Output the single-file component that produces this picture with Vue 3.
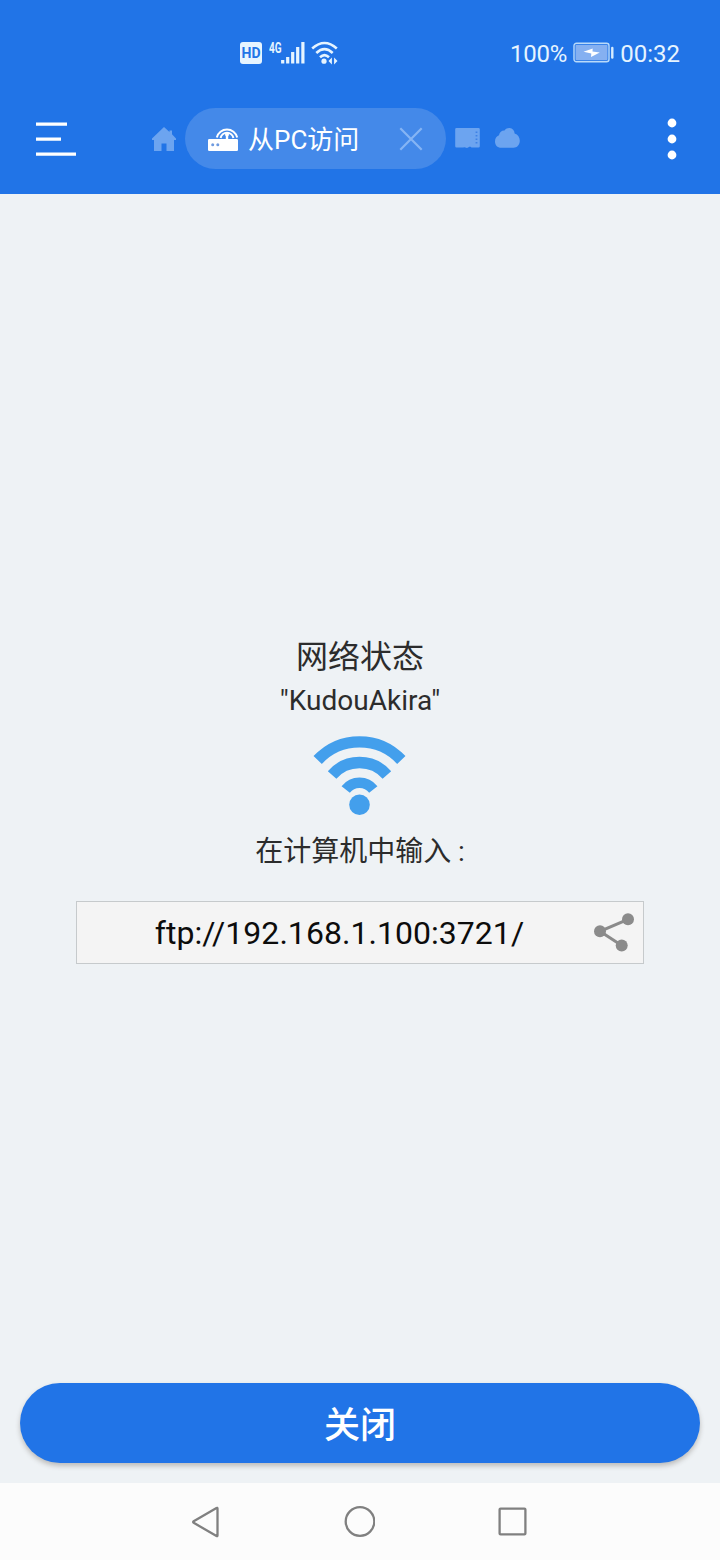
<script setup>
const network = '"KudouAkira"'
const address = 'ftp://192.168.1.100:3721/'
</script>

<template>
  <div class="screen">
    <header class="header">
      <div class="status">
        <div class="signals">
          <span class="hd">HD</span>
          <span class="gen">4G</span>
          <svg class="bars" width="24" height="24" viewBox="0 0 24 24">
            <path d="M1.700 19v3.500M6.700 16v6.500M11.700 11v11.500M16.700 6v16.500M21.900 1v21.500" stroke="#e6f4ff" stroke-width="3.200" />
          </svg>
          <svg class="wifi-small" width="28" height="24" viewBox="0 0 28 24">
            <g fill="none" stroke="#e6f4ff" stroke-width="2.600">
              <path d="M1.200 7.500Q13.500-3.500 25.800 7.500" />
              <path d="M5.300 12Q13.500 4.300 21.700 12" />
              <path d="M9 16.200Q13.500 11.900 18 16.200" />
            </g>
            <circle cx="13" cy="20.200" r="2.600" fill="#e6f4ff" />
            <path d="M17.500 20l3.400-3.600v7.200zM26.500 20l-3.400-3.600v7.200z" fill="#e6f4ff" />
          </svg>
        </div>
        <div class="power">
          <span>100%</span>
          <svg width="41" height="22" viewBox="0 0 41 22">
            <rect x="1" y="1.200" width="35" height="18.600" rx="2.500" fill="none" stroke="#b9dafa" stroke-width="1.400" />
            <rect x="2.500" y="2.700" width="32" height="15.600" rx="1" fill="#85b0f1" />
            <path d="M10.500 9.700l9.200-3.200-.2 2.900 7.300 1-8.800 4.600.3-3.600z" fill="#fff" />
            <path d="M39.300 6v9.500" stroke="#d6ecff" stroke-width="2.400" stroke-linecap="round" />
          </svg>
          <span>00:32</span>
        </div>
      </div>

      <div class="toolbar">
        <svg class="menu" width="42" height="36" viewBox="0 0 42 36">
          <path d="M0 3.200h31M0 18.200h25M0 33.200h40" stroke="#fff" stroke-width="3.200" />
        </svg>
        <svg class="home" width="24" height="24" viewBox="0 0 24 24">
          <path d="M12 0l5.500 5V3.500H20V7.300l4 4.200v1.500h-2v11h-7.500v-7.500h-5V24H2V13H0v-1.500z" fill="#6ca4f0" />
        </svg>
        <div class="tab">
          <svg width="32" height="26" viewBox="0 0 32 26">
            <rect x="0" y="13" width="30" height="12" rx="1.200" fill="#fff" />
            <circle cx="4.700" cy="18.700" r="1.500" fill="#6f9be0" />
            <circle cx="9.800" cy="18.700" r="1.500" fill="#6f9be0" />
            <path d="M19 7.500V14" stroke="#fff" stroke-width="2.400" />
            <circle cx="19" cy="8.500" r="1.900" fill="#fff" />
            <path d="M8.800 11.500A10.500 10.500 0 0 1 29.200 11.500M12.600 12A6.500 6.500 0 0 1 25.400 12" fill="none" stroke="#fff" stroke-width="2" />
          </svg>
          <span class="tab-label">从PC访问</span>
          <svg class="close" width="24" height="24" viewBox="0 0 24 24">
            <path d="M1.300 1.300l21.400 21.400M22.700 1.300L1.300 22.700" stroke="#85b4f4" stroke-width="2.200" />
          </svg>
        </div>
        <svg class="card" width="25" height="21" viewBox="0 0 25 21">
          <path d="M1.500 0H23.500a1.300 1.300 0 0 1 1.300 1.300V18.200a1.300 1.300 0 0 1-1.300 1.300H16.500l-1.500-1-3 1.500-2.500-.8-1.500.3H1.500A1.300 1.300 0 0 1 .200 18.200V1.300A1.300 1.300 0 0 1 1.500 0z" fill="#6ca4f0" />
          <path d="M21.500 3.500v12" stroke="#3f82e5" stroke-width="1.800" stroke-dasharray="1.500 2" />
        </svg>
        <svg class="cloud" width="26" height="21" viewBox="0 0 26 21">
          <path d="M6.500 19.800C2 19.800 0 16.800 0 13.500 0 10.500 1.500 8.300 4 7.300 4.500 4 7 2.300 9.500 2.500 11 .5 13-.1 14.700.1 17.500.4 19.500 2.500 19.600 5.500 23 6.500 24.800 9.500 24.800 12.800 24.800 17 22 19.800 18.500 19.800z" fill="#6ca4f0" />
        </svg>
        <svg class="more" width="10" height="42" viewBox="0 0 10 42">
          <circle cx="5" cy="5" r="4.400" fill="#fff" />
          <circle cx="5" cy="21" r="4.400" fill="#fff" />
          <circle cx="5" cy="37" r="4.400" fill="#fff" />
        </svg>
      </div>
    </header>

    <main class="content">
      <h1 class="title">网络状态</h1>
      <p class="network">{{ network }}</p>
      <svg class="wifi" width="95" height="82" viewBox="0 0 95 82">
        <g fill="none" stroke="#439fec" stroke-width="11.400">
          <path d="M5.700 25A57.200 57.200 0 0 1 89.300 25" />
          <path d="M20.100 39.900A36.500 36.500 0 0 1 74.900 39.900" />
          <path d="M33.700 54.500A17.500 17.500 0 0 1 61.300 54.500" stroke-width="10.500" />
        </g>
        <circle cx="47.500" cy="69.800" r="10.300" fill="#439fec" />
      </svg>
      <p class="hint">在计算机中输入 :</p>
      <div class="address">
        <span class="url">{{ address }}</span>
        <svg width="42" height="40" viewBox="0 0 42 40">
          <path d="M35 7.300L7 19.300l21.700 14.200" fill="none" stroke="#8b8b8b" stroke-width="3" />
          <g fill="#8b8b8b">
            <circle cx="35" cy="7.300" r="6" />
            <circle cx="7" cy="19.300" r="6" />
            <circle cx="28.700" cy="33.500" r="6" />
          </g>
        </svg>
      </div>
      <button class="stop">关闭</button>
    </main>

    <nav class="nav">
      <svg width="32" height="34" viewBox="0 0 32 34">
        <path d="M27.500 3.500V30.500Q27.500 31.600 26.500 31L3.700 17.800Q2.600 17 3.700 16.200L26.500 3Q27.500 2.400 27.500 3.500z" fill="none" stroke="#808080" stroke-width="2.300" />
      </svg>
      <svg width="32" height="34" viewBox="0 0 32 34">
        <circle cx="17" cy="16.500" r="14.300" fill="none" stroke="#808080" stroke-width="2.300" />
      </svg>
      <svg width="32" height="34" viewBox="0 0 32 34">
        <rect x="3.600" y="3.600" width="25.800" height="25.800" rx="1" fill="none" stroke="#808080" stroke-width="2.300" />
      </svg>
    </nav>
  </div>
</template>

<style>
body {
  margin: 0;
}
</style>

<style scoped>
.screen {
  width: 720px;
  height: 1560px;
  display: flex;
  flex-direction: column;
  background: #eef2f5;
  font-family: Roboto, "Noto Sans CJK SC", sans-serif;
}
svg {
  display: block;
  flex: none;
}
.header {
  height: 194px;
  background: #2174e7;
}
.status {
  height: 106px;
  box-sizing: border-box;
  padding: 0 40px 0 240px;
  display: flex;
  align-items: center;
  justify-content: space-between;
  color: #e6f4ff;
}
.signals {
  display: flex;
  align-items: center;
}
.hd {
  width: 22px;
  height: 22px;
  border-radius: 3px;
  background: #e6f4ff;
  color: #2174e7;
  font-size: 14px;
  font-weight: 700;
  line-height: 23px;
  text-align: center;
}
.gen {
  width: 12px;
  height: 24px;
  margin-left: 7px;
  font-size: 10px;
  font-weight: 700;
  line-height: 9px;
  transform: scaleY(1.5);
  transform-origin: 0 0;
}
.wifi-small {
  margin-left: 6px;
}
.power {
  display: flex;
  align-items: center;
  font-size: 24px;
}
.power span {
  padding-top: 2px;
}
.power span:first-child {
  letter-spacing: -0.2px;
}
.power svg {
  margin: 0 6px;
}
.toolbar {
  height: 65px;
  display: flex;
  align-items: center;
  padding: 0 43px 0 36px;
}
.home {
  margin-left: 74px;
}
.tab {
  width: 261px;
  height: 61px;
  box-sizing: border-box;
  margin-left: 9px;
  padding: 0 23px;
  border-radius: 31px;
  display: flex;
  align-items: center;
  background: #4489e9;
}
.tab-label {
  margin-left: 8px;
  padding-top: 2px;
  color: #fff;
  font-size: 26px;
  line-height: 36px;
}
.close {
  margin-left: auto;
}
.card {
  margin-left: 9px;
}
.cloud {
  margin-left: 15px;
}
.more {
  margin-left: auto;
}
.content {
  height: 1289px;
  box-sizing: border-box;
  padding: 439px 20px 20px;
  display: flex;
  flex-direction: column;
  align-items: center;
  color: #2c2c2c;
}
.title {
  margin: 0;
  font-size: 32px;
  font-weight: 400;
  line-height: 48px;
}
.network {
  margin: 0;
  font-size: 28px;
  line-height: 40px;
}
.wifi {
  margin: 14px 1px 0 0;
}
.hint {
  margin: 14px 0 0;
  font-size: 28px;
  line-height: 42px;
}
.address {
  width: 568px;
  height: 63px;
  box-sizing: border-box;
  margin-top: 27.500px;
  padding-right: 8px;
  border: 1px solid #c6cacc;
  display: flex;
  align-items: center;
  background: #f4f4f4;
}
.url {
  flex: 1;
  padding: 2px 0 0 9px;
  text-align: center;
  color: #0c0c0c;
  font-size: 32px;
  letter-spacing: 0.04px;
}
.stop {
  width: 680px;
  height: 80px;
  margin-top: auto;
  padding: 6px 0 0;
  border: 0;
  border-radius: 40px;
  background: #2174e7;
  box-shadow: 0 3px 5px rgba(60, 50, 40, 0.28);
  color: #fff;
  font: 500 36px/74px Roboto, "Noto Sans CJK SC", sans-serif;
}
.nav {
  height: 77px;
  box-sizing: border-box;
  padding-right: 2px;
  display: flex;
  justify-content: center;
  align-items: center;
  gap: 121px;
  background: #fcfcfc;
}
</style>
